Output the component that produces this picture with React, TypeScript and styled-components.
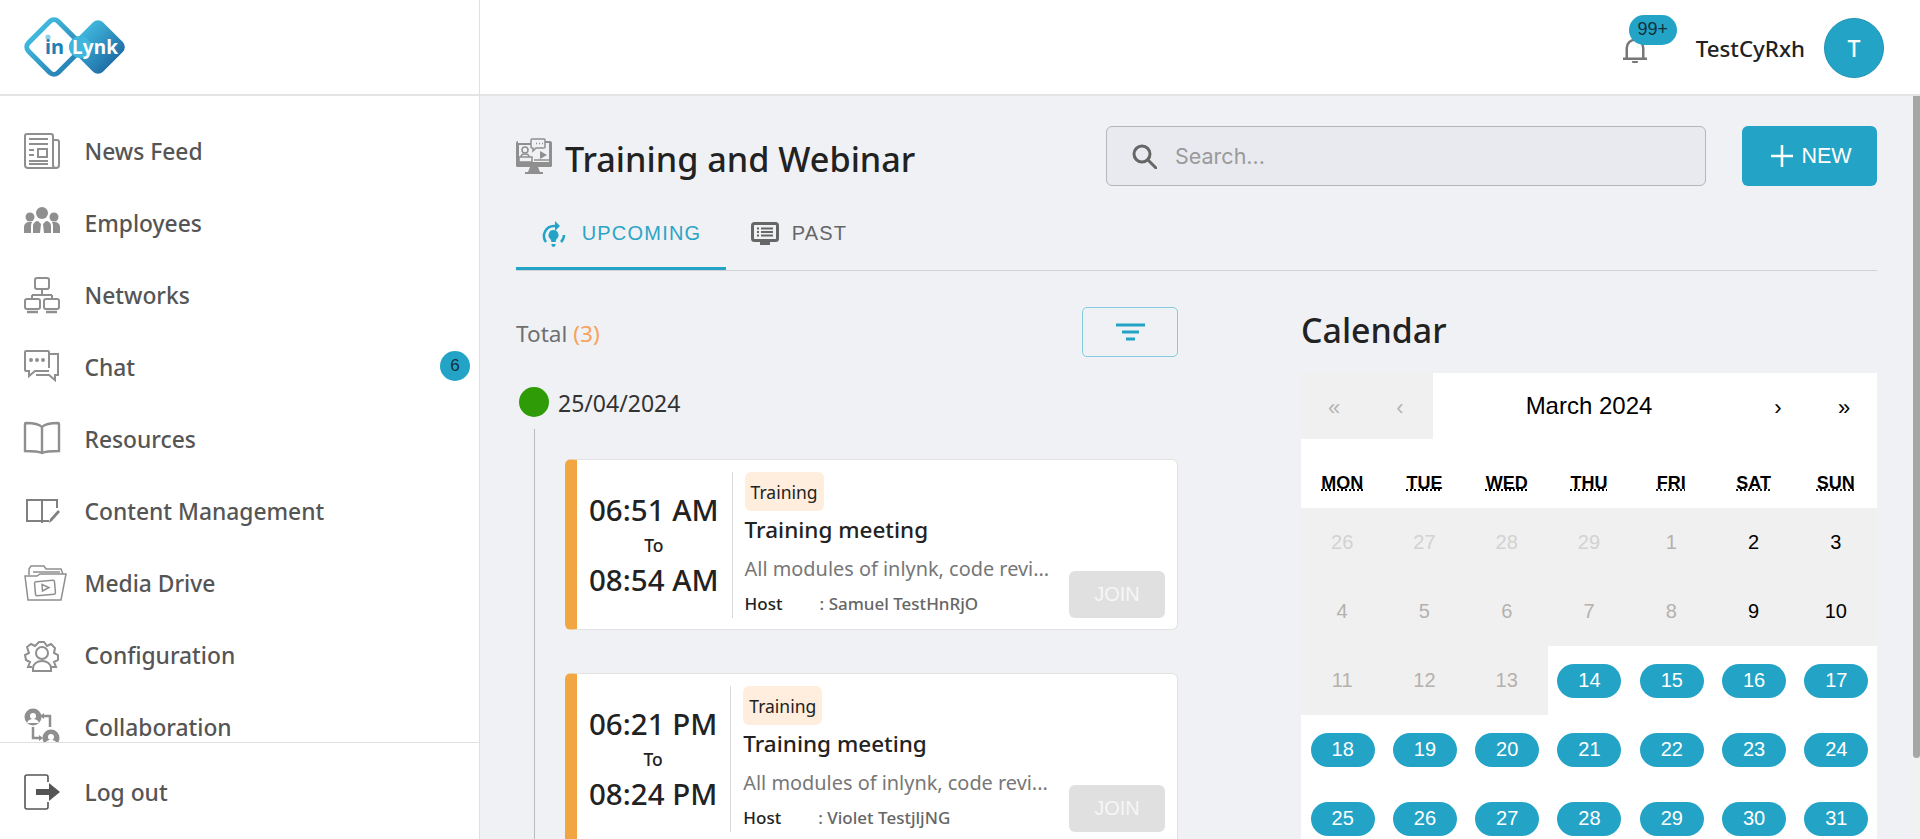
import React from 'react'
import styled, { createGlobalStyle } from 'styled-components'

const UI_FONT = `"Noto Sans", "Open Sans", sans-serif`
const ARIAL = `"Liberation Sans", Arial, sans-serif`
const TEAL = '#23a4c6'

const GlobalStyle = createGlobalStyle`
    html, body, #root {
        margin: 0;
        height: 100%;
        overflow: hidden;
    }

    body {
        font-family: ${UI_FONT};
        background: #fff;
    }

    * {
        box-sizing: border-box;
    }
`

const Shell = styled.div`
    display: flex;
    width: 100%;
    height: 100vh;
`

const Sidebar = styled.aside`
    display: flex;
    flex-direction: column;
    flex: 0 0 480px;
    height: 100%;
    background: #fff;
    border-right: 1px solid #e0e0e0;
`

const LogoCell = styled.div`
    flex: 0 0 96px;
    padding: 16px 0 0 22px;
    border-bottom: 2px solid #e4e4e4;
`

const Nav = styled.nav`
    flex: 1;
    min-height: 0;
    padding-top: 19px;
    overflow: hidden;
`

const NavRow = styled.div`
    position: relative;
    display: flex;
    align-items: center;
    gap: 24.5px;
    height: 72px;
    padding-left: 24px;
    color: #555;
    font-size: 22.8px;
    font-weight: 500;
`

const NavIcon = styled.svg`
    flex: 0 0 36px;
    width: 36px;
    height: 36px;
    overflow: visible;
    color: #8f8f8f;
`

const NavBadge = styled.span`
    position: absolute;
    top: 20px;
    right: 9px;
    display: flex;
    align-items: center;
    justify-content: center;
    width: 30px;
    height: 30px;
    border-radius: 50%;
    background: ${TEAL};
    color: #10303c;
    font-family: ${ARIAL};
    font-size: 17px;
`

const SideFooter = styled.div`
    flex: 0 0 97px;
    padding-top: 13px;
    border-top: 1px solid #e0e0e0;
`

const Right = styled.div`
    display: flex;
    flex-direction: column;
    flex: 1;
    min-width: 0;
`

const Topbar = styled.header`
    display: flex;
    align-items: center;
    justify-content: flex-end;
    flex: 0 0 96px;
    padding: 2px 36px 0 0;
    background: #fff;
    border-bottom: 2px solid #e4e4e4;
`

const BellWrap = styled.div`
    position: relative;
    width: 24px;
    height: 26px;
    margin: 3px 49px 0 0;
    color: #777;
`

const BellCount = styled.span`
    position: absolute;
    top: -22px;
    left: 6px;
    display: flex;
    align-items: center;
    justify-content: center;
    width: 48px;
    height: 30px;
    border-radius: 15px;
    background: ${TEAL};
    color: #10303c;
    font-family: ${ARIAL};
    font-size: 18px;
`

const UserName = styled.span`
    color: #222;
    font-size: 22.3px;
    font-weight: 500;
`

const Avatar = styled.div`
    display: flex;
    align-items: center;
    justify-content: center;
    width: 60px;
    height: 60px;
    margin-left: 19px;
    border: 1px solid #1f93b2;
    border-radius: 50%;
    background: ${TEAL};
    color: #fff;
    font-size: 23px;
    font-weight: 500;
`

const Body = styled.div`
    display: flex;
    flex: 1;
    min-height: 0;
`

const Main = styled.main`
    flex: 1;
    min-width: 0;
    padding: 30px 36px 0 36px;
    overflow: hidden;
    background: #f0f1f5;
`

const ScrollTrack = styled.div`
    flex: 0 0 7px;
    background: #f1f1f1;
`

const ScrollThumb = styled.div`
    height: 662px;
    border-radius: 0 0 4px 4px;
    background: #a6a6a6;
`

const PageHead = styled.div`
    display: flex;
    align-items: center;
    height: 60px;
`

const PageTitle = styled.h1`
    display: flex;
    align-items: center;
    flex: 1;
    gap: 13px;
    margin: 0;
    color: #222;
    font-size: 34.2px;
    font-weight: 500;
    white-space: nowrap;
`

const TitleText = styled.span`
    padding-top: 4px;
`

const Search = styled.div`
    display: flex;
    align-items: center;
    gap: 18px;
    width: 600px;
    height: 60px;
    padding-left: 25px;
    border: 1px solid #b4b6ba;
    border-radius: 6px;
    background: #e8eaef;
    color: #9a9a9a;
    font-family: Inter, ${ARIAL};
    font-size: 21.5px;
`

const NewButton = styled.button`
    display: flex;
    align-items: center;
    justify-content: center;
    gap: 8px;
    width: 135px;
    height: 60px;
    margin-left: 36px;
    padding: 0 0 0 4px;
    border: 0;
    border-radius: 6px;
    background: ${TEAL};
    color: #fff;
    font-family: ${ARIAL};
    font-size: 21.5px;
`

const Tabs = styled.div`
    display: flex;
    height: 71px;
    margin-top: 14px;
    border-bottom: 1px solid #d0d2d6;
`

const Tab = styled.div<{ $active?: boolean }>`
    display: flex;
    align-items: center;
    justify-content: center;
    gap: ${p => (p.$active ? 16 : 13)}px;
    width: ${p => (p.$active ? 210 : 146)}px;
    height: 70px;
    border-bottom: 3px solid ${p => (p.$active ? TEAL : 'transparent')};
    color: ${p => (p.$active ? '#2ba5c5' : '#666')};
    font-family: ${ARIAL};
    font-size: 20px;
    letter-spacing: 1.2px;
`

const Columns = styled.div`
    display: flex;
    justify-content: space-between;
    margin-top: 36px;
`

const ListColumn = styled.section`
    flex: 0 0 662px;
`

const TotalRow = styled.div`
    display: flex;
    align-items: center;
    justify-content: space-between;
    height: 50px;
    color: #6f6f6f;
    font-size: 22.6px;
`

const TotalLabel = styled.span`
    padding-top: 2px;
`

const TotalCount = styled.span`
    color: #f7a35c;
`

const FilterButton = styled.button`
    display: flex;
    align-items: center;
    justify-content: center;
    width: 96px;
    height: 50px;
    padding: 0;
    border: 1px solid #84cbdf;
    border-radius: 5px;
    background: transparent;
`

const DateRow = styled.div`
    display: flex;
    align-items: center;
    gap: 9px;
    height: 30px;
    margin: 30px 0 0 3px;
    color: #333;
    font-size: 23px;
    line-height: 30px;
`

const DateText = styled.span`
    padding-top: 2px;
`

const Dot = styled.span`
    width: 30px;
    height: 30px;
    border-radius: 50%;
    background: #2f9b06;
`

const Timeline = styled.div`
    display: flex;
    flex-direction: column;
    gap: 43px;
    margin: 12px 0 0 18px;
    padding: 30px 0 0 30px;
    border-left: 1px solid #b9bbbf;
`

const Card = styled.article`
    display: flex;
    height: 171px;
    padding: 12px 12px 11px 0;
    border: 1px solid #e2e2e2;
    border-left: 12px solid #f2a641;
    border-radius: 6px;
    background: #fff;
`

const TimeColumn = styled.div`
    display: flex;
    flex-direction: column;
    align-items: center;
    justify-content: center;
    padding: 0 13px 0 12px;
    border-right: 1px solid #d9d9d9;
    color: #222;
    font-size: 29.5px;
    font-weight: 500;
    line-height: 38px;
    white-space: nowrap;
`

const ToLabel = styled.span`
    margin: 4px 0;
    font-size: 17.5px;
    line-height: 24px;
`

const CardBody = styled.div`
    flex: 1;
    min-width: 0;
    padding-left: 12px;
`

const TypeBadge = styled.span`
    display: inline-flex;
    align-items: center;
    height: 39px;
    padding: 0 6px;
    border-radius: 6px;
    background: #ffeedd;
    color: #222;
    font-size: 17.5px;
`

const CardTitle = styled.h3`
    margin: 3px 0 0;
    color: #222;
    font-size: 22.5px;
    font-weight: 500;
    line-height: 32px;
`

const CardDesc = styled.p`
    margin: 9px 0 0;
    color: #777;
    font-size: 19.9px;
    line-height: 27px;
    white-space: nowrap;
`

const HostRow = styled.div`
    display: flex;
    margin-top: 10px;
    color: #666;
    font-size: 17px;
    font-weight: 500;
    line-height: 24px;
`

const HostLabel = styled.span`
    flex: 0 0 75px;
    color: #222;
`

const JoinButton = styled.button`
    align-self: flex-end;
    flex: 0 0 96px;
    height: 47px;
    padding: 0;
    border: 0;
    border-radius: 6px;
    background: #e0e0e0;
    color: #f6f6f6;
    font-family: ${ARIAL};
    font-size: 20px;
`

const CalendarColumn = styled.section`
    flex: 0 0 576px;
`

const CalendarTitle = styled.h2`
    height: 46px;
    margin: 0 0 20px;
    color: #222;
    font-size: 33.9px;
    font-weight: 500;
    line-height: 46px;
`

const CalendarBox = styled.div`
    background: #fff;
    font-family: ${ARIAL};
`

const CalendarNav = styled.div`
    display: flex;
    height: 66px;
`

const NavArrow = styled.button`
    flex: 0 0 66px;
    padding: 4px 0 0;
    border: 0;
    background: ${p => (p.disabled ? '#f0f0f0' : '#fff')};
    color: ${p => (p.disabled ? '#b5b5b5' : '#000')};
    font-family: ${ARIAL};
    font-size: 22px;
`

const MonthLabel = styled.div`
    display: flex;
    align-items: center;
    justify-content: center;
    flex: 1;
    font-size: 24px;
`

const Weekdays = styled.div`
    display: grid;
    grid-template-columns: repeat(7, 1fr);
    height: 69px;
    padding-top: 34px;
    font-size: 18px;
    font-weight: 700;
    text-align: center;
    text-transform: uppercase;
`

const DaysGrid = styled.div`
    display: grid;
    grid-template-columns: repeat(7, 1fr);
    grid-auto-rows: 69px;
`

type DayKind = 'neighbor' | 'past' | 'weekend' | 'open'

const DAY_COLORS: Record<DayKind, string> = {
    neighbor: '#d2d2d2',
    past: '#b5b1ae',
    weekend: '#000',
    open: '#fff',
}

const DayTile = styled.div<{ $kind: DayKind }>`
    display: flex;
    align-items: center;
    justify-content: center;
    background: ${p => (p.$kind === 'open' ? '#fff' : '#f0f0f0')};
    color: ${p => DAY_COLORS[p.$kind]};
    font-size: 20px;
`

const DayPill = styled.span`
    display: flex;
    align-items: center;
    justify-content: center;
    width: 64px;
    height: 34px;
    margin-left: 1px;
    border-radius: 17px;
    background: ${TEAL};
`

const WEEKDAYS = [
    ['Monday', 'Mon'],
    ['Tuesday', 'Tue'],
    ['Wednesday', 'Wed'],
    ['Thursday', 'Thu'],
    ['Friday', 'Fri'],
    ['Saturday', 'Sat'],
    ['Sunday', 'Sun'],
]

const DAYS: { label: number; kind: DayKind }[] = [
    ...[26, 27, 28, 29].map(label => ({ label, kind: 'neighbor' as DayKind })),
    { label: 1, kind: 'past' },
    { label: 2, kind: 'weekend' },
    { label: 3, kind: 'weekend' },
    ...[4, 5, 6, 7, 8].map(label => ({ label, kind: 'past' as DayKind })),
    { label: 9, kind: 'weekend' },
    { label: 10, kind: 'weekend' },
    ...[11, 12, 13].map(label => ({ label, kind: 'past' as DayKind })),
    ...Array.from({ length: 18 }, (_, i) => ({ label: i + 14, kind: 'open' as DayKind })),
]

const MEETINGS = [
    { from: '06:51 AM', to: '08:54 AM', host: 'Samuel TestHnRjO' },
    { from: '06:21 PM', to: '08:24 PM', host: 'Violet TestjljNG' },
]

function Logo() {
    return (
        <svg width="106" height="62" viewBox="0 0 106 62">
            <defs>
                <linearGradient id="logoFill" x1="0" x2="1" y1="0" y2="0">
                    <stop offset="0" stopColor="#3fb6dc" />
                    <stop offset="1" stopColor="#2070a8" />
                </linearGradient>
                <linearGradient id="logoLine" x1="0" x2="1" y1="0" y2="0">
                    <stop offset="0" stopColor="#3fb6dc" />
                    <stop offset="1" stopColor="#2a86b8" />
                </linearGradient>
            </defs>
            <rect x="11" y="10" width="42" height="42" rx="6" transform="rotate(45 32 31)" fill="#fff" stroke="url(#logoLine)" strokeWidth="5" />
            <rect x="55" y="10" width="42" height="42" rx="7" transform="rotate(45 76 31)" fill="url(#logoFill)" />
            <circle cx="58" cy="31" r="11" fill="#3fb6dc" />
            <circle cx="26" cy="21" r="2.6" fill="#8fd0ea" />
            <text x="23" y="38" fontFamily={UI_FONT} fontSize="20" fontWeight="700" fill="#1f7fb3">in</text>
            <text x="50" y="38" fontFamily={UI_FONT} fontSize="19" fontWeight="700" fill="#fff" textLength="46">Lynk</text>
        </svg>
    )
}

const Stroke = { fill: 'none', stroke: 'currentColor', strokeWidth: 2 }

const NAV_ICONS: Record<string, React.ReactNode> = {
    news: (
        <g {...Stroke}>
            <path d="M29 7h4a2 2 0 0 1 2 2v23a3 3 0 0 1-3 3H4a3 3 0 0 1-3-3V3a2 2 0 0 1 2-2h24a2 2 0 0 1 2 2v29a3 3 0 0 0 3 3" />
            <path d="M5 6h19M5 11h19M5 17h5M5 22h5M5 28h19M5 31h19" />
            <rect x="14" y="16" width="9" height="8" />
        </g>
    ),
    employees: (
        <g fill="currentColor">
            <circle cx="18" cy="8" r="6" />
            <circle cx="6" cy="12" r="4.5" />
            <circle cx="30" cy="12" r="4.5" />
            <path d="M0 28v-6a5 5 0 0 1 5-5h3a8 8 0 0 0-1 4v7zM36 28v-6a5 5 0 0 0-5-5h-3a8 8 0 0 1 1 4v7zM9 28v-7a5 5 0 0 1 5-5l3 3-1 9zM27 28v-7a5 5 0 0 0-5-5l-3 3 1 9z" />
        </g>
    ),
    networks: (
        <g {...Stroke}>
            <rect x="11" y="1" width="14" height="11" rx="2" />
            <path d="M18 12v6M8 18h20M8 18v4M28 18v4" />
            <rect x="1" y="22" width="15" height="10" rx="2" />
            <rect x="20" y="22" width="15" height="10" rx="2" />
            <path d="M3 35h11M22 35h11" strokeWidth="2.5" />
        </g>
    ),
    chat: (
        <g {...Stroke}>
            <path d="M25 19V3a1 1 0 0 0-1-1H2a1 1 0 0 0-1 1v18a1 1 0 0 0 1 1h3v5l6-5h14" />
            <path d="M25 5h9v21h-3v5l-6-5H12" />
            <circle cx="7" cy="11" r="1" fill="currentColor" />
            <circle cx="13" cy="11" r="1" fill="currentColor" />
            <circle cx="19" cy="11" r="1" fill="currentColor" />
        </g>
    ),
    resources: (
        <g {...Stroke} strokeWidth="2.4">
            <path d="M18 6c-3-3-9-4-16-4-1 0-1 1-1 1v27c7 0 13 0 17 2 4-2 10-2 17-2V3s0-1-1-1c-7 0-13 1-16 4zM18 6v25" />
        </g>
    ),
    content: (
        <g {...Stroke} stroke="#808080">
            <path d="M33 15V7H3v21h22M18 7v23" />
            <path d="M25 30l1-4 8-9 2 2-8 9z" fill="#808080" stroke="none" />
        </g>
    ),
    media: (
        <g {...Stroke} strokeWidth="1.5">
            <path d="M1 11l3 24h33l5-26H16l-3 2zM5 10V4l2-3h13l2 3h15l2 5M9 7h27" />
            <rect x="11" y="16" width="20" height="14" rx="1.5" transform="rotate(-5 21 23)" />
            <path d="M18 19.500l7 3-6.500 3.500z" />
        </g>
    ),
    config: (
        <g {...Stroke}>
            <path d="M8 30H4l2-5-4-2-1-5 4-2-2-6 4-3 4 2 4-4h5l3 4 4-2 4 4-1 5 4 2v5l-4 2 2 5h-5" />
            <circle cx="18" cy="16" r="6" />
            <path d="M9 34v-3c0-4 4-7 9-7s9 3 9 7v3z" />
        </g>
    ),
    collab: (
        <g>
            <circle cx="9" cy="8" r="8.500" fill="currentColor" />
            <circle cx="9" cy="7" r="3" fill="#fff" />
            <path d="M3 14c1-3 3-4 6-4s5 1 6 4z" fill="#fff" />
            <circle cx="27" cy="29" r="8.500" fill="currentColor" />
            <circle cx="27" cy="28" r="3" fill="#fff" />
            <path d="M21 35c1-3 3-4 6-4s5 1 6 4z" fill="#fff" />
            <path d="M9 18v11h6M26 18V7h-6" fill="none" stroke="currentColor" strokeWidth="2.500" />
            <path d="M15 26l4 3-4 3zM20 4l-4 3 4 3z" fill="currentColor" />
        </g>
    ),
    logout: (
        <g>
            <path d="M24 8V3a2 2 0 0 0-2-2H3a2 2 0 0 0-2 2v30a2 2 0 0 0 2 2h19a2 2 0 0 0 2-2v-5" fill="none" stroke="#555" strokeWidth="1.6" />
            <path d="M12 15h13V9l11 9-11 9v-6H12z" fill="#555" />
        </g>
    ),
}

function MenuIcon({ name }: { name: string }) {
    return <NavIcon viewBox="0 0 36 36">{NAV_ICONS[name]}</NavIcon>
}

function App() {
    const links = [
        ['news', 'News Feed'],
        ['employees', 'Employees'],
        ['networks', 'Networks'],
        ['chat', 'Chat'],
        ['resources', 'Resources'],
        ['content', 'Content Management'],
        ['media', 'Media Drive'],
        ['config', 'Configuration'],
        ['collab', 'Collaboration'],
    ]

    return (
        <Shell>
            <GlobalStyle />

            <Sidebar>
                <LogoCell>
                    <Logo />
                </LogoCell>

                <Nav>
                    {links.map(([icon, label]) => (
                        <NavRow key={icon}>
                            <MenuIcon name={icon} />
                            {label}
                            {icon === 'chat' && <NavBadge>6</NavBadge>}
                        </NavRow>
                    ))}
                </Nav>

                <SideFooter>
                    <NavRow>
                        <MenuIcon name="logout" />
                        Log out
                    </NavRow>
                </SideFooter>
            </Sidebar>

            <Right>
                <Topbar>
                    <BellWrap>
                        <svg width="24" height="26" viewBox="0 0 24 26" fill="currentColor">
                            <path d="M0 20.5h2.5V11a9.5 9.5 0 0 1 19 0v9.5H24V23H0zM5 20.5h14V11a7 7 0 0 0-14 0z" fillRule="evenodd" />
                            <path d="M9 24h6a3 3 0 0 1-6 0z" />
                        </svg>
                        <BellCount>99+</BellCount>
                    </BellWrap>
                    <UserName>TestCyRxh</UserName>
                    <Avatar>T</Avatar>
                </Topbar>

                <Body>
                    <Main>
                        <PageHead>
                            <PageTitle>
                                <svg width="36" height="36" viewBox="0 0 36 36">
                                    <path d="M2 5h13v2H3v17h30V5h-7V3h8a2 2 0 0 1 2 2v22a2 2 0 0 1-2 2H2a2 2 0 0 1-2-2V5a2 2 0 0 1 2-2z" fill="#8f8f8f" />
                                    <path d="M0 24h36v3a2 2 0 0 1-2 2H2a2 2 0 0 1-2-2zM14 29h8l2 5h3v2H9v-2h3z" fill="#8f8f8f" />
                                    <circle cx="9" cy="12" r="3" fill="none" stroke="#8f8f8f" strokeWidth="1.5" />
                                    <path d="M3 19h13v5H3zM5 19c0-2 2-3 4-3s4 1 4 3" fill="none" stroke="#8f8f8f" strokeWidth="1.5" />
                                    <path d="M16 1h12a1 1 0 0 1 1 1v7a1 1 0 0 1-1 1h-8l-3 3v-3h-1a1 1 0 0 1-1-1V2a1 1 0 0 1 1-1z" fill="#f0f1f5" stroke="#8f8f8f" strokeWidth="1.5" />
                                    <path d="M20 5.500h1M23 5.500h1M26 5.500h1" stroke="#8f8f8f" strokeWidth="1.500" />
                                    <path d="M24 13l7 4-7 4z" fill="#8f8f8f" />
                                    <path d="M18 22h15" stroke="#8f8f8f" strokeWidth="1.500" />
                                </svg>
                                <TitleText>Training and Webinar</TitleText>
                            </PageTitle>

                            <Search>
                                <svg width="25" height="25" viewBox="0 0 25 25" fill="none" stroke="#666" strokeWidth="3">
                                    <circle cx="10" cy="10" r="8" />
                                    <path d="M16 16l8 8" strokeLinecap="round" />
                                </svg>
                                Search...
                            </Search>

                            <NewButton>
                                <svg width="22" height="22" viewBox="0 0 22 22" stroke="#fff" strokeWidth="2.500">
                                    <path d="M11 0v22M0 11h22" />
                                </svg>
                                NEW
                            </NewButton>
                        </PageHead>

                        <Tabs>
                            <Tab $active>
                                <svg width="25" height="26" viewBox="0 0 25 26" fill="none" stroke={TEAL} strokeWidth="2.500">
                                    <path d="M5 21A10 10 0 0 1 13 5h3M20 21a10 10 0 0 0 3-7" />
                                    <path d="M14 0l5 5-5 5z" fill={TEAL} stroke="none" />
                                    <path d="M12.500 9a5 5 0 0 1 3 9l-1 3h-4l-1-3a5 5 0 0 1 3-9zM10.500 23h4v1.500l-1.500 1.500h-1l-1.500-1.500z" fill={TEAL} stroke="none" />
                                </svg>
                                UPCOMING
                            </Tab>
                            <Tab>
                                <svg width="28" height="24" viewBox="0 0 28 24" fill="none" stroke="#666">
                                    <rect x="1.500" y="1.500" width="25" height="17" rx="2" strokeWidth="3" />
                                    <path d="M6 6.500h2M10 6.500h12M6 10h2M10 10h12M6 13.500h2M10 13.500h12" strokeWidth="1.800" />
                                    <path d="M9 20h10v3H9z" fill="#666" stroke="none" />
                                </svg>
                                PAST
                            </Tab>
                        </Tabs>

                        <Columns>
                            <ListColumn>
                                <TotalRow>
                                    <TotalLabel>Total <TotalCount>(3)</TotalCount></TotalLabel>
                                    <FilterButton aria-label="Filter">
                                        <svg width="29" height="18" viewBox="0 0 29 18" stroke={TEAL} strokeWidth="3">
                                            <path d="M0 2h29M6 9h17M10 16h9" />
                                        </svg>
                                    </FilterButton>
                                </TotalRow>

                                <DateRow>
                                    <Dot />
                                    <DateText>25/04/2024</DateText>
                                </DateRow>

                                <Timeline>
                                    {MEETINGS.map(meeting => (
                                        <Card key={meeting.from}>
                                            <TimeColumn>
                                                {meeting.from}
                                                <ToLabel>To</ToLabel>
                                                {meeting.to}
                                            </TimeColumn>
                                            <CardBody>
                                                <TypeBadge>Training</TypeBadge>
                                                <CardTitle>Training meeting</CardTitle>
                                                <CardDesc>All modules of inlynk, code revi...</CardDesc>
                                                <HostRow>
                                                    <HostLabel>Host</HostLabel>
                                                    : {meeting.host}
                                                </HostRow>
                                            </CardBody>
                                            <JoinButton>JOIN</JoinButton>
                                        </Card>
                                    ))}
                                </Timeline>
                            </ListColumn>

                            <CalendarColumn>
                                <CalendarTitle>Calendar</CalendarTitle>
                                <CalendarBox>
                                    <CalendarNav>
                                        <NavArrow disabled>«</NavArrow>
                                        <NavArrow disabled>‹</NavArrow>
                                        <MonthLabel>March 2024</MonthLabel>
                                        <NavArrow>›</NavArrow>
                                        <NavArrow>»</NavArrow>
                                    </CalendarNav>
                                    <Weekdays>
                                        {WEEKDAYS.map(([full, short]) => (
                                            <div key={full}>
                                                <abbr title={full}>{short}</abbr>
                                            </div>
                                        ))}
                                    </Weekdays>
                                    <DaysGrid>
                                        {DAYS.map(day => (
                                            <DayTile key={`${day.kind}-${day.label}`} $kind={day.kind}>
                                                {day.kind === 'open' ? <DayPill>{day.label}</DayPill> : day.label}
                                            </DayTile>
                                        ))}
                                    </DaysGrid>
                                </CalendarBox>
                            </CalendarColumn>
                        </Columns>
                    </Main>

                    <ScrollTrack>
                        <ScrollThumb />
                    </ScrollTrack>
                </Body>
            </Right>
        </Shell>
    )
}

export default App
